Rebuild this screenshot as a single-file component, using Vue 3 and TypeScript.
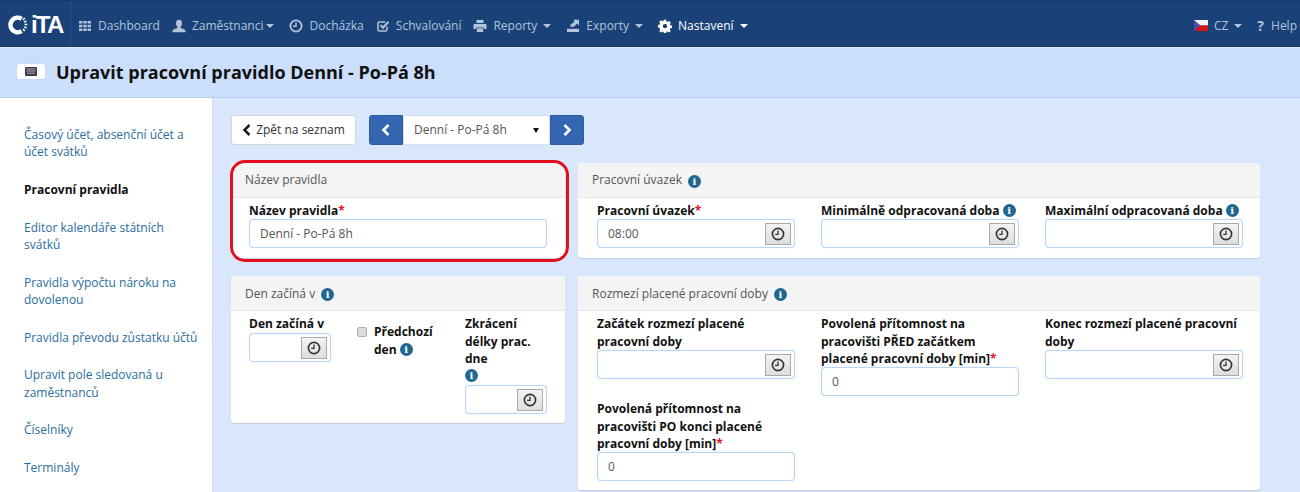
<script setup lang="ts">
interface NavItem { id: string; label: string; caret?: boolean; active?: boolean }
const navItems: NavItem[] = [
  { id: 'th', label: 'Dashboard' },
  { id: 'user', label: 'Zaměstnanci', caret: true },
  { id: 'clock', label: 'Docházka' },
  { id: 'check', label: 'Schvalování' },
  { id: 'print', label: 'Reporty', caret: true },
  { id: 'export', label: 'Exporty', caret: true },
  { id: 'cog', label: 'Nastavení', caret: true, active: true },
]
const sideItems: { label: string; active?: boolean }[] = [
  { label: 'Časový účet, absenční účet a účet svátků' },
  { label: 'Pracovní pravidla', active: true },
  { label: 'Editor kalendáře státních svátků' },
  { label: 'Pravidla výpočtu nároku na dovolenou' },
  { label: 'Pravidla převodu zůstatku účtů' },
  { label: 'Upravit pole sledovaná u zaměstnanců' },
  { label: 'Číselníky' },
  { label: 'Terminály' },
]
</script>

<template>
  <div class="page">
    <nav class="nav">
      <div class="brand">
        <svg class="ring" width="21" height="20" viewBox="0 0 22 22">
          <path d="M15.500 4.200A8 8 0 1 0 15.500 17.800" fill="none" stroke="#fff" stroke-width="5" />
          <path d="M17 5.500l2-2M18.200 7.800l2.600-1M18.800 10.500h2.900M18.400 13.200l2.600 1M17 15.600l2 2" fill="none" stroke="#fff" stroke-width="1.800" />
        </svg>
        <span class="logo-text">iTA</span>
      </div>
      <div class="nav-items">
        <a v-for="item in navItems" :key="item.id" class="nav-item" :class="{ active: item.active, 'has-caret': item.caret, 'tight-caret': item.id === 'user' }">
          <svg class="nav-icon" width="14" height="14" viewBox="0 0 14 14" fill="currentColor">
            <template v-if="item.id === 'th'">
              <path d="M1 2h3.400v2.600H1zM5.300 2h3.400v2.600H5.300zM9.600 2H13v2.600H9.600zM1 5.700h3.400v2.600H1zM5.300 5.700h3.400v2.600H5.300zM9.600 5.700H13v2.600H9.600zM1 9.400h3.400V12H1zM5.300 9.400h3.400V12H5.300zM9.600 9.400H13V12H9.600z" />
            </template>
            <template v-else-if="item.id === 'user'">
              <path d="M7 0.800c2 0 3 1.500 3 3.500 0 1.500-.6 2.800-1.400 3.500v1.200c1.800.6 4.400 1.300 4.900 2.500v1.700H.5v-1.700c.5-1.200 3.100-1.900 4.900-2.500V7.800C4.600 7.100 4 5.800 4 4.300c0-2 1-3.500 3-3.500z" />
            </template>
            <template v-else-if="item.id === 'clock'">
              <circle cx="7" cy="7" r="5.600" fill="none" stroke="currentColor" stroke-width="1.800" />
              <path d="M7 3.600v3.700H4" fill="none" stroke="currentColor" stroke-width="1.500" />
            </template>
            <template v-else-if="item.id === 'check'">
              <path d="M11 7.500v3.200a1.300 1.300 0 0 1-1.300 1.300H3.300A1.300 1.300 0 0 1 2 10.700V4.300A1.300 1.300 0 0 1 3.300 3h6" fill="none" stroke="currentColor" stroke-width="1.500" />
              <path d="M4.500 6.300L7 8.800l5.500-6" fill="none" stroke="currentColor" stroke-width="2" />
            </template>
            <template v-else-if="item.id === 'print'">
              <path d="M3.500 1h7v3h-7zM1.500 5h11c.5 0 1 .5 1 1v4h-2.500V8.500H3V10H.5V6c0-.5.5-1 1-1zM3.800 9.300h6.400V13H3.800z" />
            </template>
            <template v-else-if="item.id === 'export'">
              <path d="M1 9.800h12V13H1z" />
              <path d="M7.500 0.800H13v5.500l-1.900-1.900-3.300 3.400H4.500V5.800l3.900-3.100z" />
            </template>
            <template v-else>
              <path d="M5.800.8h2.400l.3 1.700 1.100.5 1.500-1 1.700 1.700-1 1.500.5 1.100 1.700.3v2.400l-1.700.3-.5 1.100 1 1.500-1.700 1.700-1.500-1-1.100.5-.3 1.700H5.800l-.3-1.700-1.100-.5-1.500 1-1.700-1.700 1-1.500-.5-1.100L0 8.300V5.900l1.700-.3.5-1.100-1-1.500 1.700-1.700 1.500 1 1.100-.5zM7 4.900a2.200 2.200 0 1 0 0 4.400 2.200 2.200 0 0 0 0-4.400z" fill-rule="evenodd" />
            </template>
          </svg>
          <span>{{ item.label }}</span>
          <i v-if="item.caret" class="caret"></i>
        </a>
      </div>
      <div class="nav-right">
        <a class="nav-item lang">
          <svg class="flag" width="14" height="11" viewBox="0 0 14 11">
            <rect width="14" height="5.500" fill="#f2f2f6" />
            <rect y="5.500" width="14" height="5.500" fill="#d8140f" />
            <path d="M0 0l6.500 5.500L0 11z" fill="#4a4fa8" />
          </svg>
          <span>CZ</span>
          <i class="caret"></i>
        </a>
        <a class="nav-item help">
          <span class="qmark">?</span>
          <span>Help</span>
        </a>
      </div>
    </nav>

    <header class="head">
      <span class="head-icon">
        <svg width="12" height="9" viewBox="0 0 12 9">
          <rect width="12" height="9" rx="1" fill="#3b3a44" />
          <path d="M1.500 2h9M1.500 4h9M2 6.200h8" stroke="#b9a9bd" stroke-width="1" />
        </svg>
      </span>
      <h1>Upravit pracovní pravidlo Denní - Po-Pá 8h</h1>
    </header>

    <div class="content">
      <aside class="side">
        <a v-for="s in sideItems" :key="s.label" class="side-item" :class="{ active: s.active }">{{ s.label }}</a>
      </aside>

      <main class="main">
        <div class="toolbar">
          <button class="back" type="button">
            <svg width="10" height="12" viewBox="0 0 10 12"><path d="M7.500 1L2.500 6l5 5" fill="none" stroke="#222" stroke-width="2.600" /></svg>
            Zpět na seznam
          </button>
          <div class="pager">
            <button class="arrow left" type="button">
              <svg width="10" height="12" viewBox="0 0 10 12"><path d="M7.500 1L2.500 6l5 5" fill="none" stroke="#fff" stroke-width="2.600" /></svg>
            </button>
            <div class="select"><span>Denní - Po-Pá 8h</span><i class="sel-caret"></i></div>
            <button class="arrow right" type="button">
              <svg width="10" height="12" viewBox="0 0 10 12"><path d="M2.500 1l5 5-5 5" fill="none" stroke="#fff" stroke-width="2.600" /></svg>
            </button>
          </div>
        </div>

        <div class="panels">
          <section class="panel highlighted">
            <div class="highlight"></div>
            <div class="panel-head">Název pravidla</div>
            <div class="panel-body">
              <label class="field">
                <span class="lab">Název pravidla<em>*</em></span>
                <input class="inp" value="Denní - Po-Pá 8h" />
              </label>
            </div>
          </section>

          <section class="panel">
            <div class="panel-head">Pracovní úvazek <span class="info head-info">i</span></div>
            <div class="panel-body wide">
              <div class="field">
                <span class="lab">Pracovní úvazek<em>*</em></span>
                <div class="time"><input class="inp" value="08:00" /><button class="clock" type="button"><svg width="14" height="14" viewBox="0 0 12 12"><circle cx="6" cy="6" r="4.800" fill="none" stroke="#333" stroke-width="1.400" /><path d="M6 3v3.300H3.500" fill="none" stroke="#333" stroke-width="1.100" /></svg></button></div>
              </div>
              <div class="field">
                <span class="lab">Minimálně odpracovaná doba <span class="info">i</span></span>
                <div class="time"><input class="inp" /><button class="clock" type="button"><svg width="14" height="14" viewBox="0 0 12 12"><circle cx="6" cy="6" r="4.800" fill="none" stroke="#333" stroke-width="1.400" /><path d="M6 3v3.300H3.500" fill="none" stroke="#333" stroke-width="1.100" /></svg></button></div>
              </div>
              <div class="field">
                <span class="lab">Maximální odpracovaná doba <span class="info">i</span></span>
                <div class="time"><input class="inp" /><button class="clock" type="button"><svg width="14" height="14" viewBox="0 0 12 12"><circle cx="6" cy="6" r="4.800" fill="none" stroke="#333" stroke-width="1.400" /><path d="M6 3v3.300H3.500" fill="none" stroke="#333" stroke-width="1.100" /></svg></button></div>
              </div>
            </div>
          </section>

          <section class="panel self-start">
            <div class="panel-head">Den začíná v <span class="info head-info">i</span></div>
            <div class="panel-body narrow">
              <div class="field">
                <span class="lab">Den začíná v</span>
                <div class="time"><input class="inp" /><button class="clock" type="button"><svg width="14" height="14" viewBox="0 0 12 12"><circle cx="6" cy="6" r="4.800" fill="none" stroke="#333" stroke-width="1.400" /><path d="M6 3v3.300H3.500" fill="none" stroke="#333" stroke-width="1.100" /></svg></button></div>
              </div>
              <label class="check">
                <input type="checkbox" class="box" />
                <span class="lab">Předchozí den <span class="info">i</span></span>
              </label>
              <div class="field">
                <span class="lab">Zkrácení délky prac. dne <span class="info-line"><span class="info">i</span></span></span>
                <div class="time"><input class="inp" /><button class="clock" type="button"><svg width="14" height="14" viewBox="0 0 12 12"><circle cx="6" cy="6" r="4.800" fill="none" stroke="#333" stroke-width="1.400" /><path d="M6 3v3.300H3.500" fill="none" stroke="#333" stroke-width="1.100" /></svg></button></div>
              </div>
            </div>
          </section>

          <section class="panel self-start">
            <div class="panel-head">Rozmezí placené pracovní doby <span class="info head-info">i</span></div>
            <div class="panel-body wide rows">
              <div class="field">
                <span class="lab">Začátek rozmezí placené pracovní doby</span>
                <div class="time"><input class="inp" /><button class="clock" type="button"><svg width="14" height="14" viewBox="0 0 12 12"><circle cx="6" cy="6" r="4.800" fill="none" stroke="#333" stroke-width="1.400" /><path d="M6 3v3.300H3.500" fill="none" stroke="#333" stroke-width="1.100" /></svg></button></div>
              </div>
              <label class="field">
                <span class="lab">Povolená přítomnost na pracovišti PŘED začátkem placené pracovní doby [min]<em>*</em></span>
                <input class="inp" value="0" />
              </label>
              <div class="field">
                <span class="lab">Konec rozmezí placené pracovní doby</span>
                <div class="time"><input class="inp" /><button class="clock" type="button"><svg width="14" height="14" viewBox="0 0 12 12"><circle cx="6" cy="6" r="4.800" fill="none" stroke="#333" stroke-width="1.400" /><path d="M6 3v3.300H3.500" fill="none" stroke="#333" stroke-width="1.100" /></svg></button></div>
              </div>
              <label class="field">
                <span class="lab">Povolená přítomnost na pracovišti PO konci placené pracovní doby [min]<em>*</em></span>
                <input class="inp" value="0" />
              </label>
            </div>
          </section>
        </div>
      </main>
    </div>
  </div>
</template>

<style>
html, body { margin: 0; background: #d9e7fc; }
</style>

<style scoped>
.page {
  width: 1300px;
  height: 492px;
  overflow: hidden;
  display: flex;
  flex-direction: column;
  font: 12px/17.33px "Open Sans", "Noto Sans", sans-serif;
  color: #333;
  background: #d9e7fc;
}
.nav {
  height: 45px;
  flex: none;
  display: flex;
  align-items: center;
  background: #1a4279;
  border-top: 1px solid #143a70;
  border-bottom: 1px solid #0f3463;
  box-shadow: 0 1px 0 #e6effd;
  position: relative;
}
.brand {
  width: 71px;
  height: 100%;
  flex: none;
  box-sizing: border-box;
  border-right: 1px solid #2a5288;
  display: flex;
  align-items: center;
  padding: 3px 0 0 7px;
  gap: 3px;
}
.logo-text {
  font: 700 24px/24px "Liberation Sans", sans-serif;
  color: #fff;
  letter-spacing: -1.800px;
}
.nav-items {
  display: flex;
  align-items: center;
  gap: 12px;
  margin-left: 7px;
  padding-top: 5px;
}
.nav-item {
  display: flex;
  align-items: center;
  color: #b3c3da;
  white-space: nowrap;
}
.nav-item.active { color: #fff; }
.nav-item.has-caret { margin-right: 3px; }
.nav-item.tight-caret .caret { margin-left: 3px; }
.nav-icon { margin-right: 6px; flex: none; }
.caret {
  display: inline-block;
  width: 0;
  height: 0;
  margin-left: 6px;
  border-top: 4px solid currentColor;
  border-left: 4px solid transparent;
  border-right: 4px solid transparent;
}
.nav-right {
  margin-left: auto;
  display: flex;
  align-items: center;
  gap: 15px;
  margin-right: 3px;
  padding-top: 5px;
}
.flag { margin-right: 6px; }
.qmark { font-weight: 700; font-size: 14px; margin-right: 7px; }
.head {
  height: 50px;
  flex: none;
  margin-top: 1px;
  padding-bottom: 2px;
  box-sizing: border-box;
  display: flex;
  align-items: center;
  background: #cbdffc;
  border-bottom: 1px solid #b7cff3;
  padding-left: 17px;
}
.head-icon {
  width: 28px;
  height: 15px;
  background: #fff;
  border-radius: 2px;
  box-shadow: 0 0 1px #9aa8c0;
  display: flex;
  align-items: center;
  justify-content: center;
  margin-right: 11px;
}
.head h1 {
  margin: 0;
  font-size: 18px;
  line-height: 22px;
  font-weight: 700;
  color: #111;
}
.content { flex: 1; display: flex; min-height: 0; }
.side {
  width: 213px;
  flex: none;
  box-sizing: border-box;
  background: #fff;
  border-right: 1px solid #cfdff6;
  padding: 28px 10px 0 24px;
  display: flex;
  flex-direction: column;
  gap: 20.350px;
}
.side-item { color: #2a6d9e; }
.side-item.active { color: #111; font-weight: 700; }
.main { flex: 1; padding: 17px 0 0 18px; }
.toolbar { display: flex; align-items: center; gap: 13px; height: 30px; }
.back {
  height: 30px;
  width: 125px;
  padding: 0;
  background: #fff;
  border: 1px solid #d4d4d4;
  border-radius: 3px;
  font: inherit;
  color: #333;
  display: flex;
  align-items: center;
  justify-content: center;
  gap: 4px;
}
.pager { display: flex; height: 30px; }
.arrow {
  width: 34px;
  height: 30px;
  padding: 0;
  background: #3465b0;
  border: 1px solid #2f5ca3;
  display: flex;
  align-items: center;
  justify-content: center;
}
.arrow.left { border-radius: 3px 0 0 3px; }
.arrow.right { border-radius: 0 3px 3px 0; }
.select {
  width: 147px;
  box-sizing: border-box;
  background: #fff;
  border: 1px solid #d7dfea;
  border-radius: 3px;
  padding: 0 10px 0 10px;
  display: flex;
  align-items: center;
  justify-content: space-between;
  color: #555;
}
.sel-caret {
  width: 0;
  height: 0;
  border-top: 5px solid #111;
  border-left: 3.500px solid transparent;
  border-right: 3.500px solid transparent;
}
.panels {
  margin-top: 18px;
  display: grid;
  grid-template-columns: 334px 682px;
  column-gap: 13px;
  row-gap: 18px;
}
.panel {
  position: relative;
  background: #fff;
  border-radius: 3px;
  box-shadow: 0 1px 1px rgba(0, 0, 0, 0.12);
}
.self-start { align-self: start; }
.highlight {
  position: absolute;
  left: -1px;
  top: -3px;
  width: 339px;
  height: 102px;
  box-sizing: border-box;
  border: 3px solid #e30f1f;
  border-radius: 15px;
  pointer-events: none;
  z-index: 1;
}
.panel-head {
  height: 35px;
  box-sizing: border-box;
  padding-left: 14px;
  display: flex;
  align-items: center;
  background: #f4f4f4;
  border-bottom: 1px solid #e6e6e6;
  border-radius: 3px 3px 0 0;
  color: #555;
}
.head-info { margin-left: 6px; margin-top: 0; }
.panel-body { padding: 4px 18px 10px; }
.panel-body.wide {
  padding: 4px 17px 10px 19px;
  display: grid;
  grid-template-columns: repeat(3, 198px);
  column-gap: 26px;
  align-items: start;
}
.panel-body.rows { row-gap: 4px; padding-bottom: 9px; }
.panel-body.narrow {
  display: grid;
  grid-template-columns: repeat(3, 82px);
  column-gap: 26px;
  align-items: start;
  padding-bottom: 9px;
}
.field { display: block; }
.lab { display: block; font-weight: 700; color: #111; }
.lab em { font-style: normal; color: #e8112d; }
.info-line { display: block; height: 17.330px; }
.info {
  display: inline-block;
  width: 13px;
  height: 13px;
  border-radius: 50%;
  background: #1f6690;
  color: #fff;
  font: 700 10px/13px "DejaVu Serif", serif;
  text-align: center;
  vertical-align: top;
  margin-top: 2px;
}
.inp {
  display: block;
  width: 100%;
  height: 29px;
  box-sizing: border-box;
  border: 1px solid #b9d5fb;
  border-radius: 4px;
  background: #fff;
  box-shadow: 0 0 1px #bcd7fb;
  padding: 0 10px;
  font: inherit;
  color: #555;
  outline: none;
}
.time { position: relative; }
.clock {
  position: absolute;
  right: 4px;
  top: 4px;
  width: 26px;
  height: 22px;
  padding: 0;
  border: 1px solid #a9a9a9;
  background: linear-gradient(#f3f3f3, #dedede);
  display: flex;
  align-items: center;
  justify-content: center;
}
.check { display: flex; padding-top: 8px; gap: 7px; align-items: flex-start; }
.box {
  appearance: none;
  flex: none;
  width: 8px;
  height: 8px;
  margin: 4px 0 0;
  box-sizing: content-box;
  background: #dcdcdc;
  border: 1px solid #b0b0b0;
  border-radius: 2px;
}
</style>
